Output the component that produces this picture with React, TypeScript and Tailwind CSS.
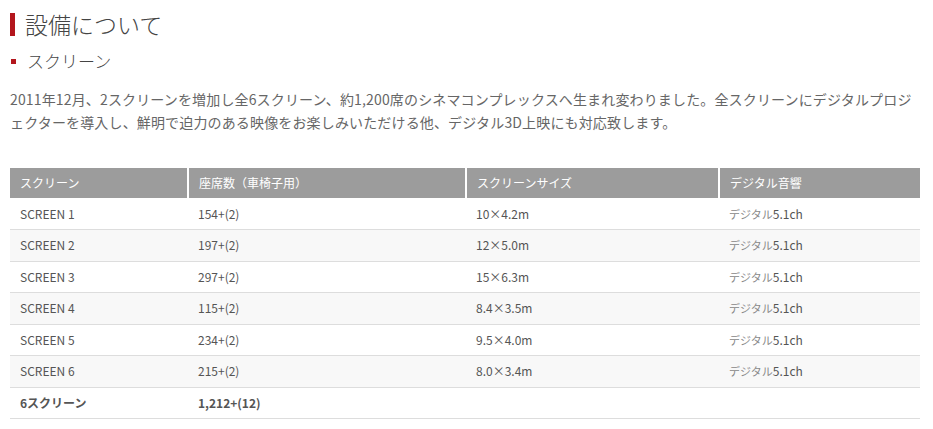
import React from 'react';

type Row = { name: string; seats: string; size: string };

const rows: Row[] = [
  { name: 'SCREEN 1', seats: '154+(2)', size: '10×4.2m' },
  { name: 'SCREEN 2', seats: '197+(2)', size: '12×5.0m' },
  { name: 'SCREEN 3', seats: '297+(2)', size: '15×6.3m' },
  { name: 'SCREEN 4', seats: '115+(2)', size: '8.4×3.5m' },
  { name: 'SCREEN 5', seats: '234+(2)', size: '9.5×4.0m' },
  { name: 'SCREEN 6', seats: '215+(2)', size: '8.0×3.4m' },
];

const App: React.FC = () => {
  return (
    <div className="min-h-screen bg-white font-['Noto_Sans_CJK_JP',sans-serif] text-[#555]">
      <div className="ml-[10px] w-[910px] pt-[10px]">
        {/* 見出し */}
        <h1 className="flex items-center gap-[10px] text-[23px] font-light leading-[28px] text-[#444]">
          <span className="block h-[23px] w-[5px] bg-[#b3161d]" />
          <span>設備について</span>
        </h1>

        <h2 className="mt-[11px] flex items-center gap-[11px] pl-[1px] text-[17px] font-light leading-[24px] text-[#444]">
          <span className="block h-[5px] w-[5px] bg-[#b3161d]" />
          <span>スクリーン</span>
        </h2>

        <p className="mt-[15px] whitespace-nowrap text-[14px] leading-[23px] tracking-[0.15px] text-[#666]">
          2011年12月、2スクリーンを増加し全6スクリーン、約1,200席のシネマコンプレックスへ生まれ変わりました。全スクリーンにデジタルプロジ
          <br />
          ェクターを導入し、鮮明で迫力のある映像をお楽しみいただける他、デジタル3D上映にも対応致します。
        </p>

        <table className="mt-[34px] w-full border-collapse text-left text-[12px] leading-[16px]">
          <thead>
            <tr className="bg-[#9c9c9c] text-white">
              <th className="h-[30px] w-[178px] border-r-2 border-white px-[10px] font-normal">スクリーン</th>
              <th className="w-[278px] border-r-2 border-white px-[10px] font-normal">座席数（車椅子用）</th>
              <th className="w-[253px] border-r-2 border-white px-[10px] font-normal">スクリーンサイズ</th>
              <th className="px-[10px] font-normal">デジタル音響</th>
            </tr>
          </thead>
          <tbody>
            {rows.map((r, i) => (
              <tr key={r.name} className={`border-b border-[#dddddd] ${i % 2 === 1 ? 'bg-[#f8f8f8]' : 'bg-white'}`}>
                <td className="h-[31.5px] px-[10px]">{r.name}</td>
                <td className="px-[10px]">{r.seats}</td>
                <td className="px-[10px]">{r.size}</td>
                <td className="px-[10px]">
                  <span className="text-[11px] text-[#888]">デジタル</span>5.1ch
                </td>
              </tr>
            ))}
            <tr className="border-b border-[#dddddd] bg-white font-bold">
              <td className="h-[31.5px] px-[10px]">6スクリーン</td>
              <td className="px-[10px]">1,212+(12)</td>
              <td className="px-[10px]"></td>
              <td className="px-[10px]"></td>
            </tr>
          </tbody>
        </table>
      </div>
    </div>
  );
};

export default App;
